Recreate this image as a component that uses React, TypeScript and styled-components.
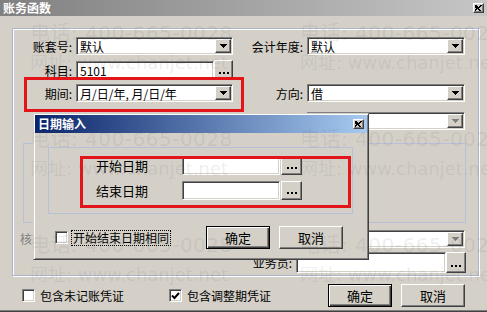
import React from 'react';
import styled, { createGlobalStyle, css } from 'styled-components';

const GlobalStyle = createGlobalStyle`
  html, body { margin: 0; padding: 0; background: #d4d0c8; }
  body { font-family: "Noto Sans CJK SC", "DejaVu Sans", sans-serif; font-size: 12px; }
`;

const raised = css`
  background: #d4d0c8;
  border: 1px solid;
  border-color: #fff #404040 #404040 #fff;
  box-shadow: inset -1px -1px #808080, inset 1px 1px #d4d0c8;
`;

const sunken = css`
  background: #fff;
  border: 1px solid;
  border-color: #808080 #fff #fff #808080;
  box-shadow: inset 1px 1px #404040, inset -1px -1px #d4d0c8;
`;

const Screen = styled.div`
  position: relative;
  width: 487px;
  height: 312px;
  overflow: hidden;
  background: #d4d0c8;
  color: #000;
  font-family: "Noto Sans CJK SC", "DejaVu Sans", sans-serif;
  font-size: 12px;
  box-shadow: inset 0 -1px #404040, inset 0 -2px #808080;
`;

const Caption = styled.div<{ $active?: boolean; $h: number }>`
  height: ${p => p.$h}px;
  display: flex;
  align-items: center;
  justify-content: space-between;
  padding: 0 3px 0 3px;
  background: ${p =>
    p.$active
      ? 'linear-gradient(to right, #0a246a, #a6caf0)'
      : 'linear-gradient(to right, #808080, #c6c6c6)'};
  color: #fff;
  font-weight: bold;
  font-size: 12px;
  line-height: 1;
`;

const CloseBox = styled.div`
  ${raised};
  box-sizing: border-box;
  width: 11px;
  height: 10px;
  display: flex;
  align-items: center;
  justify-content: center;
`;

const Body = styled.div`
  padding: 12px 9px 0 12px;
`;

const GroupBox = styled.div`
  box-sizing: border-box;
  width: 467px;
  height: 248px;
  border: 1px solid #a9b3cc;
  box-shadow: inset 1px 1px #fff, 1px 1px #fff;
  display: flex;
  flex-direction: column;
`;

const Row = styled.div<{ $top: number; $h?: number }>`
  display: grid;
  grid-template-columns: 63px 157px 10px 64px 158px;
  align-items: center;
  height: ${p => p.$h ?? 18}px;
  margin-top: ${p => p.$top}px;
`;

const Label = styled.div<{ $col?: number }>`
  grid-column: ${p => p.$col ?? 1};
  text-align: right;
  padding-right: 4px;
  white-space: nowrap;
`;

const Combo = styled.div<{ $col?: string }>`
  ${sunken};
  grid-column: ${p => p.$col ?? 'auto'};
  box-sizing: border-box;
  height: 18px;
  padding: 1px;
  display: flex;
  align-items: center;
`;

const ComboText = styled.div`
  flex: 1;
  padding-left: 2px;
  white-space: nowrap;
  overflow: hidden;
`;

const ArrowBtn = styled.div`
  ${raised};
  box-sizing: border-box;
  width: 16px;
  height: 100%;
  display: flex;
  align-items: center;
  justify-content: center;
`;

const Pair = styled.div`
  display: flex;
  align-items: center;
`;

const TextBox = styled.div<{ $w: number; $h?: number }>`
  ${sunken};
  box-sizing: border-box;
  width: ${p => p.$w}px;
  height: ${p => p.$h ?? 18}px;
  padding: 0 3px;
  display: flex;
  align-items: center;
  white-space: nowrap;
`;

const DotsBtn = styled.div<{ $w: number; $h: number }>`
  ${raised};
  box-sizing: border-box;
  width: ${p => p.$w}px;
  height: ${p => p.$h}px;
  display: flex;
  align-items: flex-end;
  justify-content: center;
  padding-bottom: 5px;
`;

const SubGroup = styled.div`
  box-sizing: border-box;
  margin: 13px 0 0 10px;
  width: 443px;
  height: 80px;
  border: 1px solid #b7c0d6;
`;

const GrayLabel = styled.div`
  padding-left: 7px;
  color: #808080;
  white-space: nowrap;
`;

const EndRow = styled.div<{ $top: number }>`
  display: flex;
  justify-content: flex-end;
  align-items: center;
  margin-top: ${p => p.$top}px;
  padding-right: 12px;
  height: 21px;
`;

const Footer = styled.div`
  display: flex;
  align-items: center;
  height: 23px;
  margin-top: 8px;
  padding-left: 10px;
`;

const CheckBox = styled.div`
  ${sunken};
  box-sizing: border-box;
  width: 13px;
  height: 13px;
  display: flex;
  align-items: center;
  justify-content: center;
  flex-shrink: 0;
`;

const CheckText = styled.span<{ $gap: number; $w?: number }>`
  margin-left: ${p => p.$gap}px;
  width: ${p => (p.$w ? `${p.$w}px` : 'auto')};
  white-space: nowrap;
`;

const FocusText = styled.span`
  margin-left: 3px;
  padding: 0 1px;
  border: 1px dotted #000;
  line-height: 14px;
  white-space: nowrap;
`;

const Button = styled.div<{ $default?: boolean; $ml: number }>`
  box-sizing: border-box;
  width: 64px;
  height: 23px;
  margin-left: ${p => p.$ml}px;
  display: flex;
  align-items: center;
  justify-content: center;
  background: #d4d0c8;
  font-size: 13px;
  ${p =>
    p.$default
      ? css`
          border: 1px solid #000;
          box-shadow: inset 1px 1px #fff, inset -1px -1px #404040, inset -2px -2px #808080;
        `
      : raised};
`;

const Dialog = styled.div`
  position: absolute;
  left: 33px;
  top: 113px;
  width: 336px;
  height: 147px;
  box-sizing: border-box;
  padding: 1px;
  background: #d4d0c8;
  border: 1px solid;
  border-color: #d4d0c8 #404040 #404040 #d4d0c8;
  box-shadow: inset 1px 1px #fff, inset -1px -1px #808080;
  z-index: 5;
`;

const DlgGroup = styled.div`
  box-sizing: border-box;
  margin: 14px 0 0 13px;
  width: 305px;
  height: 67px;
  border: 1px solid #b7c0d6;
  padding: 8px 0 0 47px;
  display: grid;
  grid-template-columns: 86px 99px 22px;
  grid-auto-rows: 19px;
  row-gap: 6px;
  align-items: center;
`;

const DlgLabel = styled.div`
  font-size: 13px;
  white-space: nowrap;
`;

const DlgFooter = styled.div`
  display: flex;
  align-items: center;
  height: 23px;
  margin-top: 12px;
  padding-left: 20px;
`;

const Mark = styled.div<{ $x: number; $y: number; $w: number; $h: number }>`
  position: absolute;
  left: ${p => p.$x}px;
  top: ${p => p.$y}px;
  width: ${p => p.$w}px;
  height: ${p => p.$h}px;
  box-sizing: border-box;
  border: 3px solid #e3151a;
  z-index: 8;
  pointer-events: none;
`;

const Watermark = styled.div`
  position: absolute;
  inset: 0;
  z-index: 10;
  pointer-events: none;
  display: grid;
  grid-template-columns: 270px 270px;
  grid-auto-rows: 106px;
  padding: 21px 0 0 30px;
  color: rgba(90, 90, 90, 0.11);
  font-family: "DejaVu Sans", "Noto Sans CJK SC", sans-serif;
  white-space: nowrap;
`;

const WmPhone = styled.div`
  font-size: 20px;
  line-height: 24px;
  letter-spacing: 0.5px;
`;

const WmUrl = styled.div`
  font-size: 18px;
  line-height: 22px;
  margin-top: 7px;
`;

const Arrow = ({ disabled }: { disabled?: boolean }) => (
  <svg width="7" height="4" viewBox="0 0 7 4" shapeRendering="crispEdges">
    <path d="M0 0h7v1h-1v1h-1v1h-1v1h-1v-1h-1v-1h-1v-1h-1z" fill={disabled ? '#808080' : '#000'} />
  </svg>
);

const Dots = () => (
  <svg width="10" height="2" viewBox="0 0 10 2" shapeRendering="crispEdges">
    <rect x="0" y="0" width="2" height="2" fill="#000" />
    <rect x="4" y="0" width="2" height="2" fill="#000" />
    <rect x="8" y="0" width="2" height="2" fill="#000" />
  </svg>
);

const Cross = () => (
  <svg width="7" height="6" viewBox="0 0 7 6" shapeRendering="crispEdges">
    <path d="M0 0h2v1h1v1h1v-1h1v-1h2v1h-1v1h-1v1h-1v1h1v1h1v1h-2v-1h-1v-1h-1v1h-1v1h-2v-1h1v-1h1v-1h-1v-1h-1z" fill="#000" />
  </svg>
);

const Tick = () => (
  <svg width="9" height="9" viewBox="0 0 9 9">
    <path d="M1 4.5 L3.5 7 L8 2" stroke="#000" strokeWidth="2" fill="none" />
  </svg>
);

const ComboBox = ({ value, col, disabled }: { value?: string; col?: string; disabled?: boolean }) => (
  <Combo $col={col}>
    <ComboText>{value}</ComboText>
    <ArrowBtn>
      <Arrow disabled={disabled} />
    </ArrowBtn>
  </Combo>
);

export default function App() {
  const wm = [0, 1, 2, 3, 4, 5];
  return (
    <>
      <GlobalStyle />
      <Screen>
        <Caption $h={16}>
          <span>账务函数</span>
          <CloseBox>
            <Cross />
          </CloseBox>
        </Caption>
        <Body>
          <GroupBox>
            <Row $top={8}>
              <Label>账套号:</Label>
              <ComboBox value="默认" />
              <Label $col={4}>会计年度:</Label>
              <ComboBox value="默认" col="5" />
            </Row>
            <Row $top={5} $h={20}>
              <Label>科目:</Label>
              <Pair>
                <TextBox $w={139}>5101</TextBox>
                <DotsBtn $w={19} $h={20}>
                  <Dots />
                </DotsBtn>
              </Pair>
            </Row>
            <Row $top={4}>
              <Label>期间:</Label>
              <ComboBox value="月/日/年, 月/日/年" />
              <Label $col={4}>方向:</Label>
              <ComboBox value="借" col="5" />
            </Row>
            <Row $top={10}>
              <ComboBox col="5" disabled />
            </Row>
            <SubGroup />
            <Row $top={6} $h={19}>
              <GrayLabel>核算项目:</GrayLabel>
              <ComboBox col="2 / 6" disabled />
            </Row>
            <EndRow $top={4}>
              <Label>业务员:</Label>
              <TextBox $w={150} $h={21} />
              <DotsBtn $w={20} $h={21}>
                <Dots />
              </DotsBtn>
            </EndRow>
          </GroupBox>
          <Footer>
            <CheckBox />
            <CheckText $gap={5} $w={129}>包含未记账凭证</CheckText>
            <CheckBox>
              <Tick />
            </CheckBox>
            <CheckText $gap={5} $w={70}>包含调整期凭证</CheckText>
            <Button $default $ml={71}>确定</Button>
            <Button $ml={9}>取消</Button>
          </Footer>
        </Body>

        <Dialog>
          <Caption $active $h={18}>
            <span>日期输入</span>
            <CloseBox>
              <Cross />
            </CloseBox>
          </Caption>
          <DlgGroup>
            <DlgLabel>开始日期</DlgLabel>
            <TextBox $w={98} $h={19} />
            <DotsBtn $w={21} $h={19}>
              <Dots />
            </DotsBtn>
            <DlgLabel>结束日期</DlgLabel>
            <TextBox $w={98} $h={19} />
            <DotsBtn $w={21} $h={19}>
              <Dots />
            </DotsBtn>
          </DlgGroup>
          <DlgFooter>
            <CheckBox />
            <FocusText>开始结束日期相同</FocusText>
            <Button $default $ml={35}>确定</Button>
            <Button $ml={9}>取消</Button>
          </DlgFooter>
        </Dialog>

        <Mark $x={24} $y={77} $w={220} $h={35} />
        <Mark $x={80} $y={156} $w={271} $h={52} />

        <Watermark>
          {wm.map(i => (
            <div key={i}>
              <WmPhone>电话: 400-665-0028</WmPhone>
              <WmUrl>网址: www.chanjet.net</WmUrl>
            </div>
          ))}
        </Watermark>
      </Screen>
    </>
  );
}
